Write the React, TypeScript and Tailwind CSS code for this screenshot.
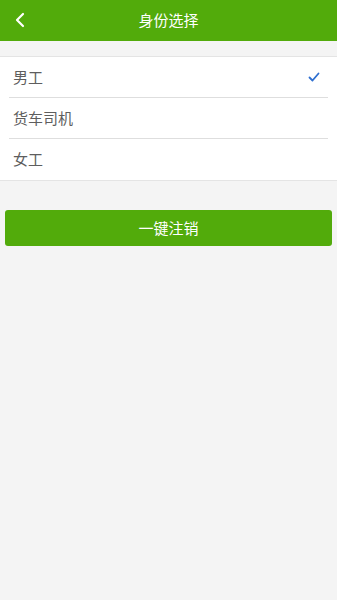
import React from "react";

const items = ["男工", "货车司机", "女工"];

export default function App() {
  const selected = 0;
  return (
    <div
      className="min-h-[600px] bg-[#f4f4f4]"
      style={{ fontFamily: '"Noto Sans CJK SC", "Noto Sans", sans-serif' }}
    >
      <div className="relative flex h-[41px] items-center justify-center bg-[#52ab0b]">
        <svg className="absolute left-[14px] top-[12px]" width="12" height="16" viewBox="0 0 12 16">
          <path d="M9 2 L3 8 L9 14" fill="none" stroke="#fff" strokeWidth="2.2" strokeLinecap="round" strokeLinejoin="round" />
        </svg>
        <span className="text-[15px] text-white">身份选择</span>
      </div>

      <div className="mt-[15px] border-y border-[#e4e4e4] bg-white">
        {items.map((t, i) => (
          <div key={t} className="px-[9px]">
            <div
              className={
                "flex h-[41px] items-center justify-between pl-[4px] pr-[8px] " +
                (i < items.length - 1 ? "border-b border-[#dedede]" : "")
              }
            >
              <span className="text-[15px] text-[#5e5e5e]">{t}</span>
              {i === selected && (
                <svg width="12" height="10" viewBox="0 0 12 10">
                  <path d="M1.5 5.5 L4.5 8.5 L10.5 1.5" fill="none" stroke="#2f6fd0" strokeWidth="1.8" strokeLinecap="round" strokeLinejoin="round" />
                </svg>
              )}
            </div>
          </div>
        ))}
      </div>

      <div className="mt-[29px] px-[5px]">
        <div className="flex h-[36px] items-center justify-center rounded-[3px] bg-[#52ab0b] text-[15px] text-white">
          一键注销
        </div>
      </div>
    </div>
  );
}
